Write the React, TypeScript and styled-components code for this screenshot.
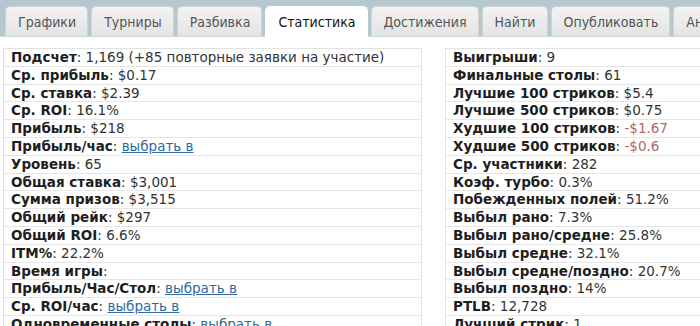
import React from "react";
import styled, { createGlobalStyle } from "styled-components";

const Global = createGlobalStyle`
  html, body { margin: 0; padding: 0; background: #fff; }
  body { font-family: "DejaVu Sans", Verdana, sans-serif; color: #222; overflow: hidden; }
`;

const Page = styled.div`
  width: 700px;
  height: 326px;
  overflow: hidden;
  display: flex;
  flex-direction: column;
`;

const TabBar = styled.div`
  display: flex;
  align-items: flex-end;
  gap: 3px;
  height: 37px;
  padding-left: 5px;
  background: #b5c8cf;
  border-bottom: 1px solid #c9d6da;
  box-sizing: border-box;
  white-space: nowrap;
  flex-shrink: 0;
`;

const Tab = styled.div<{ $active?: boolean }>`
  flex-shrink: 0;
  height: ${(p) => (p.$active ? "31px" : "30px")};
  margin-bottom: ${(p) => (p.$active ? "-1px" : "0")};
  padding: 0 11px 0 12px;
  display: flex;
  align-items: center;
  box-sizing: border-box;
  font-family: "DejaVu Sans Condensed", "DejaVu Sans", sans-serif;
  font-size: 14px;
  color: ${(p) => (p.$active ? "#111" : "#555")};
  background: ${(p) => (p.$active ? "#fff" : "linear-gradient(#f3f3f3, #e3e3e3)")};
  border: 1px solid ${(p) => (p.$active ? "#fff" : "#d2d2d2")};
  border-bottom: none;
  border-radius: 5px 5px 0 0;
`;

const Columns = styled.div`
  display: flex;
  gap: 23px;
  padding: 11px 0 0 3px;
`;

const Table = styled.div<{ $w: number }>`
  width: ${(p) => p.$w}px;
  flex-shrink: 0;
  border: 1px solid #e2e2e2;
  border-bottom: none;
  display: flex;
  flex-direction: column;
`;

const Row = styled.div`
  height: 17.8px;
  line-height: 17.8px;
  padding-left: 7px;
  border-bottom: 1px solid #e6e6e6;
  box-sizing: border-box;
  font-size: 13.5px;
  white-space: nowrap;
`;

const Label = styled.b`
  font-weight: bold;
  color: #1e1e1e;
`;

const Val = styled.span<{ $neg?: boolean }>`
  color: ${(p) => (p.$neg ? "#b06a6a" : "#333")};
`;

const Link = styled.a`
  color: #2e6a9e;
  text-decoration: underline;
`;

type Item = { l: string; v?: string; link?: boolean; neg?: boolean };

const left: Item[] = [
  { l: "Подсчет", v: "1,169 (+85 повторные заявки на участие)" },
  { l: "Ср. прибыль", v: "$0.17" },
  { l: "Ср. ставка", v: "$2.39" },
  { l: "Ср. ROI", v: "16.1%" },
  { l: "Прибыль", v: "$218" },
  { l: "Прибыль/час", link: true },
  { l: "Уровень", v: "65" },
  { l: "Общая ставка", v: "$3,001" },
  { l: "Сумма призов", v: "$3,515" },
  { l: "Общий рейк", v: "$297" },
  { l: "Общий ROI", v: "6.6%" },
  { l: "ITM%", v: "22.2%" },
  { l: "Время игры", v: "" },
  { l: "Прибыль/Час/Стол", link: true },
  { l: "Ср. ROI/час", link: true },
  { l: "Одновременные столы", link: true },
];

const right: Item[] = [
  { l: "Выигрыши", v: "9" },
  { l: "Финальные столы", v: "61" },
  { l: "Лучшие 100 стриков", v: "$5.4" },
  { l: "Лучшие 500 стриков", v: "$0.75" },
  { l: "Худшие 100 стриков", v: "-$1.67", neg: true },
  { l: "Худшие 500 стриков", v: "-$0.6", neg: true },
  { l: "Ср. участники", v: "282" },
  { l: "Коэф. турбо", v: "0.3%" },
  { l: "Побежденных полей", v: "51.2%" },
  { l: "Выбыл рано", v: "7.3%" },
  { l: "Выбыл рано/средне", v: "25.8%" },
  { l: "Выбыл средне", v: "32.1%" },
  { l: "Выбыл средне/поздно", v: "20.7%" },
  { l: "Выбыл поздно", v: "14%" },
  { l: "PTLB", v: "12,728" },
  { l: "Лучший стрик", v: "1" },
];

const tabs = ["Графики", "Турниры", "Разбивка", "Статистика", "Достижения", "Найти", "Опубликовать", "Анализ"];

function renderRow(it: Item, i: number) {
  return (
    <Row key={i}>
      <Label>{it.l}</Label>
      <Val>: </Val>
      {it.link ? <Link>выбрать в</Link> : <Val $neg={it.neg}>{it.v}</Val>}
    </Row>
  );
}

export default function App() {
  return (
    <Page>
      <Global />
      <TabBar>
        {tabs.map((t) => (
          <Tab key={t} $active={t === "Статистика"}>
            {t}
          </Tab>
        ))}
      </TabBar>
      <Columns>
        <Table $w={417}>{left.map(renderRow)}</Table>
        <Table $w={300}>{right.map(renderRow)}</Table>
      </Columns>
    </Page>
  );
}
